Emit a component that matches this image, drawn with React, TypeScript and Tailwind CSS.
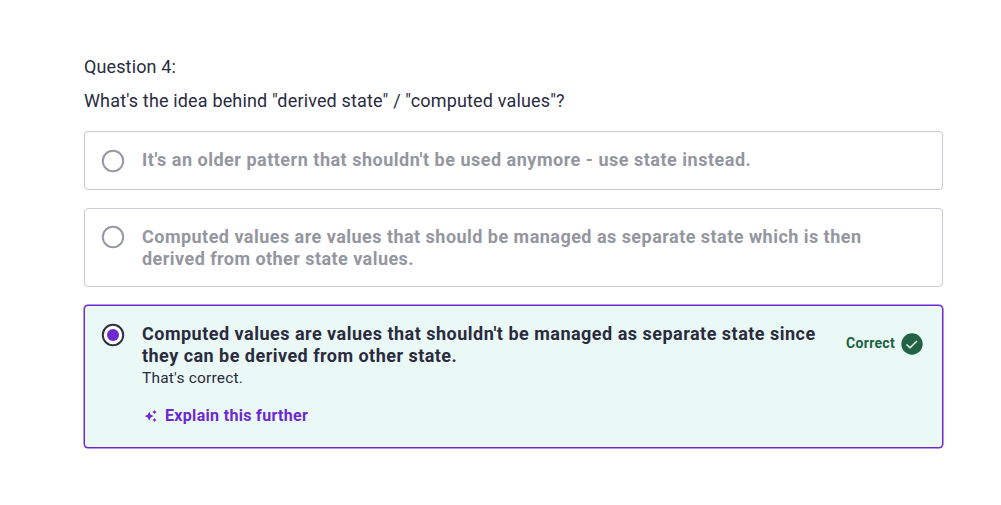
import type { ReactNode } from "react";

function Radio({ checked = false }: { checked?: boolean }) {
  return (
    <svg viewBox="0 0 24 24" className="-mx-px -mt-[1.5px] size-6 shrink-0">
      <circle cx="12" cy="12" r="10.2" fill={checked ? "#fff" : "none"} stroke={checked ? "#303141" : "#9799a4"} strokeWidth="2" />
      {checked && <circle cx="12" cy="12" r="6" fill="#6d28d2" />}
    </svg>
  );
}

function Answer({ children, className }: { children: ReactNode; className: string }) {
  return <div className={"flex w-[859px] rounded border pl-[17px] pr-5 " + className}>{children}</div>;
}

function Sparkles() {
  return (
    <svg viewBox="0 0 12 12" className="size-3 shrink-0" fill="#6d28d2">
      <path d="M4.2 1.8 5.7 4.7 8.6 6.1 5.7 7.5 4.2 10.4 2.7 7.5 -.2 6.1 2.7 4.7Z" />
      <path d="M9.5 0 10.3 1.3 11.6 2.1 10.3 2.9 9.5 4.2 8.7 2.9 7.4 2.1 8.7 1.3Z" />
      <path d="M9.5 8 10.3 9.3 11.6 10 10.3 10.8 9.5 12 8.7 10.8 7.4 10 8.7 9.3Z" />
    </svg>
  );
}

export default function App() {
  return (
    <main className="min-h-[505px] bg-white pl-[84px] pt-[54px] font-['Roboto',sans-serif] text-[#2a2b3f]">
      <p className="text-[18px] leading-[26px] tracking-[0.12px]">Question 4:</p>
      <p className="mt-2 text-[18px] leading-[26px] tracking-[0.155px]">What's the idea behind "derived state" / "computed values"?</p>
      <div className="mt-[17px] flex flex-col gap-[18px]">
        <Answer className="h-[59px] border-[#c9c9d8] pt-[18px] text-[#9496a0]">
          <Radio />
          <p className="-mt-px ml-[18px] whitespace-nowrap text-[18px] font-bold leading-[21.5px] tracking-[0.51px]">
            It's an older pattern that shouldn't be used anymore - use state instead.
          </p>
        </Answer>
        <Answer className="h-[79px] border-[#c9c9d8] pt-[17px] text-[#9496a0]">
          <Radio />
          <p className="ml-[18px] whitespace-nowrap text-[18px] font-bold leading-[21.5px] tracking-[0.47px]">
            Computed values are values that should be managed as separate state which is then
            <br />
            <span className="tracking-[0.45px]">derived from other state values.</span>
          </p>
        </Answer>
        <Answer className="h-[143px] border-[#6d28d2] bg-[#eaf9f5] pt-[18px] shadow-[0_0_0_0.5px_#6d28d2]">
          <Radio checked />
          <div className="-mt-px ml-[18px] whitespace-nowrap">
            <p className="text-[18px] font-bold leading-[21.5px] tracking-[0.49px]">
              Computed values are values that shouldn't be managed as separate state since
              <br />
              <span className="tracking-[0.47px]">they can be derived from other state.</span>
            </p>
            <p className="mt-px text-[15.5px] leading-[22px] tracking-[0.2px]">That's correct.</p>
            <button className="ml-[3px] mt-4 flex items-center gap-2 text-[16px] font-bold leading-[22px] tracking-[0.32px] text-[#6d28d2]">
              <Sparkles />
              <span>Explain this further</span>
            </button>
          </div>
          <div className="ml-auto mt-[9px] flex h-[22px] items-center gap-[6px] text-[14px] font-bold tracking-[0.3px] text-[#206241]">
            <span className="-mt-px">Correct</span>
            <svg viewBox="0 0 22 22" className="-mr-px size-[22px]" fill="none">
              <circle cx="11" cy="11" r="10.7" fill="#206241" />
              <path d="m5.5 11.5 3.5 3.3 7-6.8" stroke="#eaf9f5" strokeWidth="1.5" />
            </svg>
          </div>
        </Answer>
      </div>
    </main>
  );
}
